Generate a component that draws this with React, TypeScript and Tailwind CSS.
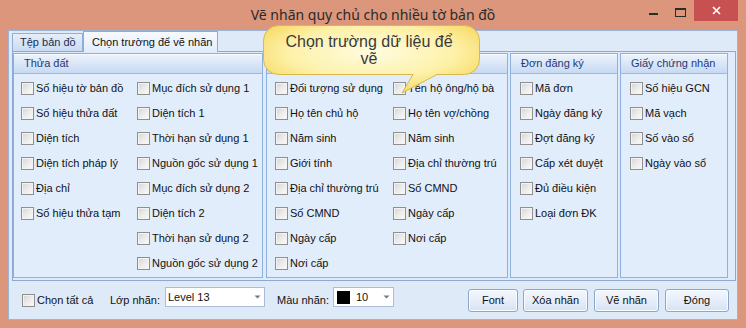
import React from "react";

const ui = "font-['Liberation_Sans',Arial,sans-serif]";

function Box() {
  return (
    <span className="block h-[13px] w-[13px] shrink-0 border border-[#8f8f8f] bg-linear-to-br from-[#d4d4d4] via-[#ebebeb] to-[#fbfbfb] shadow-[inset_0_0_0_1px_#f3f3f3]" />
  );
}

function Item({ label }: { label: string }) {
  return (
    <div className="flex h-[25px] items-center">
      <Box />
      <span className="ml-[2px] whitespace-nowrap text-[#111]">{label}</span>
    </div>
  );
}

function Group({
  title,
  className,
  cols,
  colWidth,
  pl,
}: {
  title: string;
  className: string;
  cols: string[][];
  colWidth: string;
  pl: string;
}) {
  return (
    <div className={`flex h-[225px] flex-col border border-[#8eb0de] bg-[#e2edfc] ${className}`}>
      <div className="flex h-[20px] items-center border-b border-[#9dbbe4] bg-linear-to-b from-[#edf3fc] to-[#c7daf3] pl-[10px] text-[#1e3a78] shadow-[inset_0_1px_0_#f7faff]">
        {title}
      </div>
      <div className={`flex pt-[2px] ${pl}`}>
        {cols.map((c, i) => (
          <div key={i} className={`flex flex-col ${i === 0 && cols.length > 1 ? colWidth : ""}`}>
            {c.map((l) => (
              <Item key={l} label={l} />
            ))}
          </div>
        ))}
      </div>
    </div>
  );
}

function Arrow() {
  return (
    <svg width="7" height="4" viewBox="0 0 7 4" className="shrink-0">
      <path d="M0.5 0.5 H6.5 L3.5 3.5 Z" fill="#6b7a8c" />
    </svg>
  );
}

function Btn({ label, w, className = "" }: { label: string; w: string; className?: string }) {
  return (
    <div
      className={`flex h-[23px] items-center justify-center rounded-[3px] border border-[#8ea6c8] bg-linear-to-b from-[#f4f8fd] via-[#e6eefa] to-[#d5e2f4] text-[#111] shadow-[inset_0_0_0_1px_#f8fbff] ${w} ${className}`}
    >
      {label}
    </div>
  );
}

export default function App() {
  return (
    <div className={`relative flex h-[328px] w-[746px] flex-col overflow-hidden bg-[#dc967b] text-[11px] ${ui}`}>
      {/* title bar */}
      <div className="grid h-[30px] grid-cols-[1fr_auto_1fr]">
        <div />
        <div className="flex items-center pb-[2px] font-['Noto_Sans',sans-serif] text-[14px] text-[#2a2a2a]">
          Vẽ nhãn quy chủ cho nhiều tờ bản đồ
        </div>
        <div className="flex items-start justify-end pr-[8px]">
          <div className="flex h-[21px] w-[27px] justify-center pt-[13px]">
            <span className="block h-[2px] w-[9px] bg-[#2b2b2b]" />
          </div>
          <div className="flex h-[21px] w-[27px] justify-center pt-[8px]">
            <span className="block h-[9px] w-[11px] border border-t-2 border-[#2b2b2b]" />
          </div>
          <div className="flex h-[21px] w-[44px] items-center justify-center bg-[#c75050]">
            <svg width="9" height="9" viewBox="0 0 9 9">
              <path d="M1 1 L8 8 M8 1 L1 8" stroke="#fff" strokeWidth="1.6" />
            </svg>
          </div>
        </div>
      </div>

      {/* client area */}
      <div className="ml-[8px] flex h-[290px] w-[730px] flex-col border border-[#9bb4d6] bg-[#dfeaf9]">
        {/* tabs */}
        <div className="flex h-[20px] items-start pl-[3px]">
          <div className="mt-[2px] flex h-[18px] w-[71px] items-center border border-b-0 border-[#93add3] bg-linear-to-b from-[#e6eefa] to-[#c9dbf2] pl-[7px] text-[#1b2f52]">
            Tệp bản đồ
          </div>
          <div className="relative z-10 -mb-px flex h-[21px] w-[135px] items-center border border-b-0 border-[#8fabd3] bg-linear-to-b from-[#f7faff] to-[#e2ecfa] pl-[8px] text-[#111]">
            Chọn trường để vẽ nhãn
          </div>
        </div>

        {/* panel */}
        <div className="ml-[3px] flex h-[230px] w-[724px] items-start border border-[#8ba9d2] bg-[#dfeafa] pt-[1px]">
          <Group
            title="Thửa đất"
            className="w-[250px]"
            pl="pl-[7px]"
            colWidth="w-[116px]"
            cols={[
              ["Số hiệu tờ bản đồ", "Số hiệu thửa đất", "Diện tích", "Diện tích pháp lý", "Địa chỉ", "Số hiệu thửa tạm"],
              [
                "Mục đích sử dụng 1",
                "Diện tích 1",
                "Thời hạn sử dụng 1",
                "Nguồn gốc sử dụng 1",
                "Mục đích sử dụng 2",
                "Diện tích 2",
                "Thời hạn sử dụng 2",
                "Nguồn gốc sử dụng 2",
              ],
            ]}
          />
          <Group
            title=""
            className="ml-[3px] w-[242px]"
            pl="pl-[8px]"
            colWidth="w-[118px]"
            cols={[
              ["Đối tượng sử dụng", "Họ tên chủ hộ", "Năm sinh", "Giới tính", "Địa chỉ thường trú", "Số CMND", "Ngày cấp", "Nơi cấp"],
              ["Tên hộ ông/hộ bà", "Họ tên vợ/chồng", "Năm sinh", "Địa chỉ thường trú", "Số CMND", "Ngày cấp", "Nơi cấp"],
            ]}
          />
          <Group
            title="Đơn đăng ký"
            className="ml-[2px] w-[108px]"
            pl="pl-[9px]"
            colWidth=""
            cols={[["Mã đơn", "Ngày đăng ký", "Đợt đăng ký", "Cấp xét duyệt", "Đủ điều kiện", "Loại đơn ĐK"]]}
          />
          <Group
            title="Giấy chứng nhận"
            className="ml-[2px] w-[108px]"
            pl="pl-[9px]"
            colWidth=""
            cols={[["Số hiệu GCN", "Mã vạch", "Số vào sổ", "Ngày vào sổ"]]}
          />
        </div>

        {/* bottom bar */}
        <div className="flex h-[38px] items-center">
          <div className="ml-[13px] flex w-[88px] items-center">
            <Box />
            <span className="ml-[2px] text-[#111]">Chọn tất cả</span>
          </div>
          <span className="w-[55px] text-[#111]">Lớp nhãn:</span>
          <div className="mb-[6px] flex h-[20px] w-[100px] items-center justify-between border border-[#abbdd6] bg-white pl-[2px] pr-[3px] text-[#111]">
            Level 13
            <Arrow />
          </div>
          <span className="ml-[12px] w-[56px] text-[#111]">Màu nhãn:</span>
          <div className="mb-[6px] flex h-[20px] w-[61px] items-center border border-[#abbdd6] bg-white pl-[3px] pr-[3px] text-[#111]">
            <span className="block h-[13px] w-[13px] bg-black" />
            <span className="ml-[6px]">10</span>
            <span className="ml-auto">
              <Arrow />
            </span>
          </div>
          <Btn label="Font" w="w-[50px]" className="ml-[74px]" />
          <Btn label="Xóa nhãn" w="w-[65px]" className="ml-[5px]" />
          <Btn label="Vẽ nhãn" w="w-[65px]" className="ml-[6px]" />
          <Btn label="Đóng" w="w-[64px]" className="ml-[6px]" />
        </div>
      </div>

      {/* balloon tooltip */}
      <div className="absolute left-[263px] top-[25px] h-[70px] w-[218px]">
        <svg width="218" height="70" viewBox="0 0 218 70" className="absolute inset-0">
          <defs>
            <radialGradient id="tipfill" cx="50%" cy="40%" r="65%">
              <stop offset="0%" stopColor="#fffce0" />
              <stop offset="60%" stopColor="#fdf1a8" />
              <stop offset="100%" stopColor="#f6d558" />
            </radialGradient>
          </defs>
          <path
            d="M15.5 0.5 H201.5 A15 15 0 0 1 216.5 15.5 V34.5 A15 15 0 0 1 201.5 49.5 H174 L139 68 L150 49.5 H15.5 A15 15 0 0 1 0.5 34.5 V15.5 A15 15 0 0 1 15.5 0.5 Z"
            fill="url(#tipfill)"
            stroke="#d9b84e"
          />
        </svg>
        <div className="relative flex h-[50px] w-[212px] items-center justify-center text-center text-[16px] leading-[17px] text-[#3a3a3a]">
          <span className="w-[175px]">Chọn trường dữ liệu để vẽ</span>
        </div>
      </div>
    </div>
  );
}
